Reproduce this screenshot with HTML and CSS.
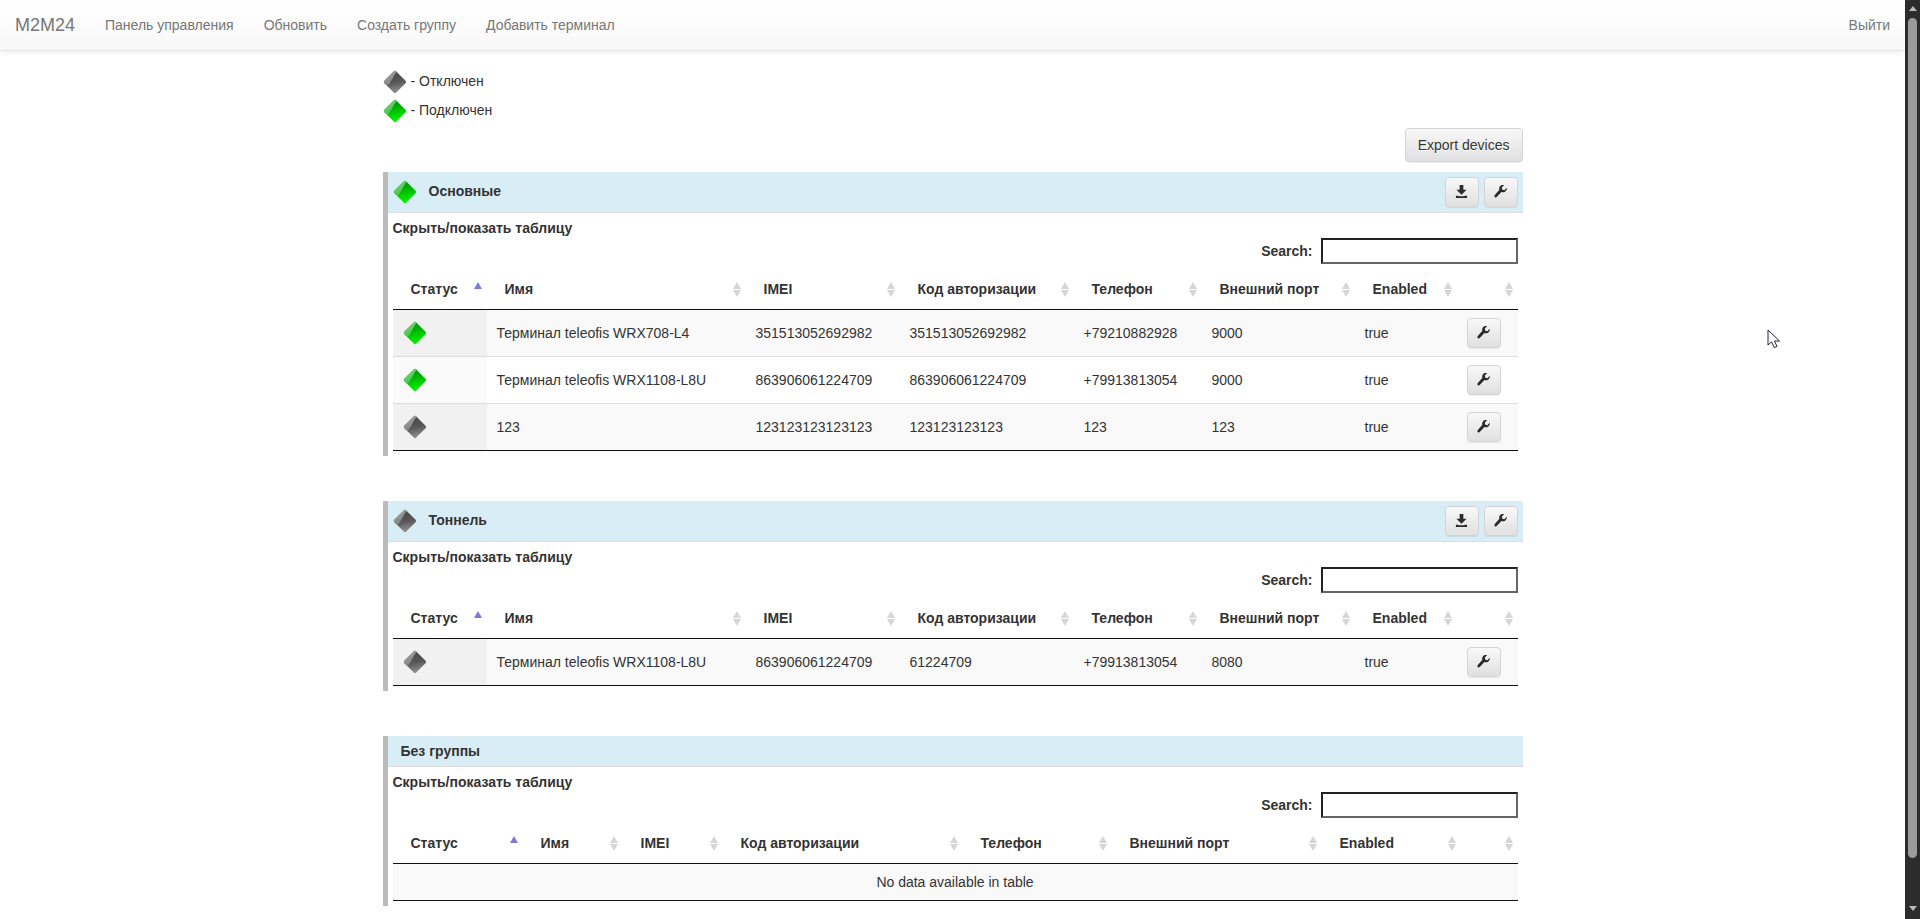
FILE: index.html
```html
<!DOCTYPE html>
<html lang="ru">
<head>
<meta charset="utf-8">
<title>M2M24</title>
<link rel="stylesheet" href="styles.css">
</head>
<body>
<svg class="defs" width="0" height="0" aria-hidden="true">
  <defs>
    <linearGradient id="gg" x1="0.3" y1="0" x2="0.5" y2="1"><stop offset="0" stop-color="#009010"/><stop offset="0.5" stop-color="#00c000"/><stop offset="1" stop-color="#00f000"/></linearGradient>
    <linearGradient id="gy" x1="0.3" y1="0" x2="0.5" y2="1"><stop offset="0" stop-color="#484848"/><stop offset="0.55" stop-color="#585858"/><stop offset="1" stop-color="#8a8a8a"/></linearGradient>
    <linearGradient id="hg" x1="0" y1="0" x2="0.6" y2="1"><stop offset="0" stop-color="#7ed87e"/><stop offset="1" stop-color="#48c048"/></linearGradient>
    <linearGradient id="hy" x1="0" y1="0" x2="0.6" y2="1"><stop offset="0" stop-color="#a8a8a8"/><stop offset="1" stop-color="#808080"/></linearGradient>
    <symbol id="d-green" viewBox="0 0 24 24">
      <path d="M12 2.6 21.4 12 12 21.4 2.6 12Z" fill="url(#gg)" stroke="url(#gg)" stroke-width="3.4" stroke-linejoin="round"/>
      <path d="M10.6 1.4C11.4.6 12.6.6 13.4 1.4L13.8 1.8C11 4.6 10 8.4 7.8 11.6 6.8 13.2 5.8 14.6 4.8 15.8L1.4 13.4C.6 12.6.6 11.4 1.4 10.6Z" fill="url(#hg)"/>
    </symbol>
    <symbol id="d-gray" viewBox="0 0 24 24">
      <path d="M12 2.6 21.4 12 12 21.4 2.6 12Z" fill="url(#gy)" stroke="url(#gy)" stroke-width="3.4" stroke-linejoin="round"/>
      <path d="M10.6 1.4C11.4.6 12.6.6 13.4 1.4L13.8 1.8C11 4.6 10 8.4 7.8 11.6 6.8 13.2 5.8 14.6 4.8 15.8L1.4 13.4C.6 12.6.6 11.4 1.4 10.6Z" fill="url(#hy)"/>
    </symbol>
    <symbol id="i-wrench" viewBox="0 0 14 14">
      <path d="M13.7 3 11.2 5.6 9 5 8.4 2.8 10.9.3C9.2-.2 7.4.3 6.3 1.6 5.5 2.7 5.3 4.1 5.8 5.2L.9 10.9C.3 11.5.3 12.6.9 13.1 1.5 13.6 2.4 13.5 2.9 13L8 7.6C9.4 8.2 11 7.9 12.2 6.9 13.5 5.8 14 4.4 13.7 3Z" fill="#2b2b2b"/>
    </symbol>
    <symbol id="i-download" viewBox="0 0 14 14">
      <path d="M5 0H9V5H12.5L7 10.5 1.5 5H5ZM1 11.5H3.2L4.4 12.2H9.6L10.8 11.5H13V14H1Z" fill="#2b2b2b"/>
    </symbol>
  </defs>
</svg>
<div class="screen">
  <div class="page">
    <nav class="navbar">
      <a class="brand" href="#">M2M24</a>
      <a class="nav-link" href="#">Панель управления</a>
      <a class="nav-link" href="#">Обновить</a>
      <a class="nav-link" href="#">Создать группу</a>
      <a class="nav-link" href="#">Добавить терминал</a>
      <a class="nav-link nav-exit" href="#">Выйти</a>
    </nav>
    <main class="container">
      <div class="legend-row"><svg class="diamond"><use href="#d-gray"/></svg><span class="legend-text">- Отключен</span></div>
      <div class="legend-row"><svg class="diamond"><use href="#d-green"/></svg><span class="legend-text">- Подключен</span></div>
      <div class="export-row"><button class="btn">Export devices</button></div>

      <section class="group">
        <header class="group-head">
          <svg class="diamond"><use href="#d-green"/></svg>
          <span class="group-title">Основные</span>
          <div class="group-actions">
            <button class="btn btn-icon"><svg class="icon"><use href="#i-download"/></svg></button>
            <button class="btn btn-icon"><svg class="icon"><use href="#i-wrench"/></svg></button>
          </div>
        </header>
        <div class="group-body">
          <div class="toggle">Скрыть/показать таблицу</div>
          <div class="search"><label for="s1">Search:</label><input id="s1" type="text"></div>
          <table class="grid">
            <colgroup><col class="w94"><col class="w259"><col class="w154"><col class="w174"><col class="w128"><col class="w153"><col class="w102"><col></colgroup>
            <thead><tr><th class="sort-asc">Статус</th><th class="sort-both">Имя</th><th class="sort-both">IMEI</th><th class="sort-both">Код авторизации</th><th class="sort-both">Телефон</th><th class="sort-both">Внешний порт</th><th class="sort-both">Enabled</th><th class="sort-both"></th></tr></thead>
            <tbody>
              <tr><td class="status"><svg class="diamond"><use href="#d-green"/></svg></td><td>Терминал teleofis WRX708-L4</td><td>351513052692982</td><td>351513052692982</td><td>+79210882928</td><td>9000</td><td>true</td><td><button class="btn btn-icon"><svg class="icon"><use href="#i-wrench"/></svg></button></td></tr>
              <tr><td class="status"><svg class="diamond"><use href="#d-green"/></svg></td><td>Терминал teleofis WRX1108-L8U</td><td>863906061224709</td><td>863906061224709</td><td>+79913813054</td><td>9000</td><td>true</td><td><button class="btn btn-icon"><svg class="icon"><use href="#i-wrench"/></svg></button></td></tr>
              <tr><td class="status"><svg class="diamond"><use href="#d-gray"/></svg></td><td>123</td><td>123123123123123</td><td>123123123123</td><td>123</td><td>123</td><td>true</td><td><button class="btn btn-icon"><svg class="icon"><use href="#i-wrench"/></svg></button></td></tr>
            </tbody>
          </table>
        </div>
      </section>

      <section class="group">
        <header class="group-head">
          <svg class="diamond"><use href="#d-gray"/></svg>
          <span class="group-title">Тоннель</span>
          <div class="group-actions">
            <button class="btn btn-icon"><svg class="icon"><use href="#i-download"/></svg></button>
            <button class="btn btn-icon"><svg class="icon"><use href="#i-wrench"/></svg></button>
          </div>
        </header>
        <div class="group-body">
          <div class="toggle">Скрыть/показать таблицу</div>
          <div class="search"><label for="s2">Search:</label><input id="s2" type="text"></div>
          <table class="grid">
            <colgroup><col class="w94"><col class="w259"><col class="w154"><col class="w174"><col class="w128"><col class="w153"><col class="w102"><col></colgroup>
            <thead><tr><th class="sort-asc">Статус</th><th class="sort-both">Имя</th><th class="sort-both">IMEI</th><th class="sort-both">Код авторизации</th><th class="sort-both">Телефон</th><th class="sort-both">Внешний порт</th><th class="sort-both">Enabled</th><th class="sort-both"></th></tr></thead>
            <tbody>
              <tr><td class="status"><svg class="diamond"><use href="#d-gray"/></svg></td><td>Терминал teleofis WRX1108-L8U</td><td>863906061224709</td><td>61224709</td><td>+79913813054</td><td>8080</td><td>true</td><td><button class="btn btn-icon"><svg class="icon"><use href="#i-wrench"/></svg></button></td></tr>
            </tbody>
          </table>
        </div>
      </section>

      <section class="group">
        <header class="group-head group-head-plain">
          <span class="plain-title">Без группы</span>
        </header>
        <div class="group-body">
          <div class="toggle">Скрыть/показать таблицу</div>
          <div class="search"><label for="s3">Search:</label><input id="s3" type="text"></div>
          <table class="grid">
            <colgroup><col class="w130"><col class="w100"><col class="w100"><col class="w240"><col class="w149"><col class="w210"><col class="w139"><col></colgroup>
            <thead><tr><th class="sort-asc">Статус</th><th class="sort-both">Имя</th><th class="sort-both">IMEI</th><th class="sort-both">Код авторизации</th><th class="sort-both">Телефон</th><th class="sort-both">Внешний порт</th><th class="sort-both">Enabled</th><th class="sort-both"></th></tr></thead>
            <tbody>
              <tr><td class="empty" colspan="8">No data available in table</td></tr>
            </tbody>
          </table>
        </div>
      </section>
    </main>
    <svg class="cursor" width="14" height="20" viewBox="0 0 14 20"><path d="M1 1V16L4.6 12.9 7.3 18.6 10 17.4 7.4 12H12.5Z" fill="#fff" stroke="#23233a" stroke-width="1"/></svg>
  </div>
  <div class="scrollbar">
    <span class="sb-up"></span>
    <span class="sb-thumb"></span>
    <span class="sb-down"></span>
  </div>
</div>
</body>
</html>
```

FILE: styles.css
```css
* { box-sizing: border-box; }
html, body { margin: 0; height: 919px; overflow: hidden; background: #fff; }
body { font: 14px/20px "Liberation Sans", Arial, sans-serif; color: #333; }
.defs { position: absolute; }
.screen { display: flex; height: 919px; }
.page { position: relative; flex: 1; min-width: 0; }

.navbar {
  display: flex; align-items: center; height: 51px;
  background: linear-gradient(to bottom, #fff 0%, #f8f8f8 100%);
  border-bottom: 1px solid #e7e7e7;
  box-shadow: 0 1px 5px rgba(0,0,0,.075);
}
.navbar a { text-decoration: none; color: #777; }
.brand { font-size: 18px; padding: 0 15px; width: 90px; }
.nav-link { padding: 0 15px; }
.nav-exit { margin-left: auto; }

.container { width: 1140px; margin: 0 auto; padding-top: 19px; }
.legend-row { display: flex; align-items: center; gap: 4px; height: 24px; margin-bottom: 5px; }
.legend-text { margin-top: -2px; }
.diamond { display: block; width: 24px; height: 24px; flex: none; }
.export-row { display: flex; justify-content: flex-end; margin-bottom: 10px; }

.btn {
  font: 14px/20px "Liberation Sans", Arial, sans-serif; color: #333;
  height: 34px; padding: 6px 12px;
  border: 1px solid #d4d4d4; border-radius: 4px;
  background: linear-gradient(to bottom, #f8f8f8 0%, #e0e0e0 100%);
  box-shadow: 0 1px 1px rgba(0,0,0,.075);
  text-shadow: 0 1px 0 #fff;
}
.btn-icon { display: flex; align-items: center; justify-content: center; width: 34px; height: 30px; padding: 0 0 2px; }
.icon { display: block; width: 13px; height: 13px; }

.group { border-left: 5px solid #bbb; margin-bottom: 45px; }
.group-head {
  display: flex; align-items: center; height: 41px; padding: 0 5px;
  background: #d9edf7; border-bottom: 1px solid #ddd; font-weight: bold;
}
.group-head-plain { height: 31px; padding-left: 13px; }
.plain-title { margin-bottom: 1px; }
.group-title { margin-left: 12px; margin-bottom: 2px; }
.group-actions { display: flex; gap: 5px; margin-left: auto; }
.group-body { padding: 5px; }
.toggle { font-weight: bold; }
.search { display: flex; justify-content: flex-end; align-items: center; gap: 8px; margin-bottom: 5px; font-weight: bold; }
.search input {
  width: 197px; height: 26px; padding: 1px; background: #fff;
  border: 2px solid; border-color: #222 #666 #666 #222;
}

.grid { width: 100%; table-layout: fixed; border-collapse: separate; border-spacing: 0; }
.w94 { width: 94px; } .w100 { width: 100px; } .w102 { width: 102px; } .w128 { width: 128px; } .w130 { width: 130px; }
.w139 { width: 139px; } .w149 { width: 149px; } .w153 { width: 153px; } .w154 { width: 154px; }
.w174 { width: 174px; } .w210 { width: 210px; } .w240 { width: 240px; } .w259 { width: 259px; }
.grid th {
  position: relative; height: 41px; padding: 10px 18px 10px 18px; text-align: left; white-space: nowrap;
  border-bottom: 1px solid #111; font-weight: bold;
}
.sort-both::before, .sort-both::after, .sort-asc::before {
  content: ""; position: absolute; right: 5px; width: 0; height: 0;
  border-left: 4.5px solid transparent; border-right: 4.5px solid transparent;
}
.sort-both::before { top: 13px; border-bottom: 7px solid #d6d6d6; }
.sort-both::after { top: 21px; border-top: 7px solid #d6d6d6; }
.sort-asc::before { top: 13px; border-bottom: 7px solid #7b7bd8; }
.grid td { padding: 8px 10px; border-top: 1px solid #ddd; background: #fff; white-space: nowrap; overflow: hidden; }
.grid tbody tr:first-child td { border-top: 0; }
.grid tbody tr:last-child td { border-bottom: 1px solid #111; }
.grid tbody tr:nth-child(odd) td { background: #f9f9f9; }
.grid tbody tr:nth-child(odd) td.status { background: #f1f1f1; }
.grid tbody tr:nth-child(even) td.status { background: #fafafa; }
.grid td.empty { text-align: center; }

.cursor { position: absolute; left: 1767px; top: 329px; }

.scrollbar { display: flex; flex-direction: column; align-items: center; width: 15px; height: 919px; background: #2c2c2c; }
.sb-up, .sb-down { display: block; width: 0; height: 0; border-left: 4.5px solid transparent; border-right: 4.5px solid transparent; }
.sb-up { margin-top: 6px; border-bottom: 5px solid #bbb; }
.sb-thumb { display: block; width: 9px; height: 840px; margin-top: 7px; background: #9b9b9b; border-radius: 5px; }
.sb-down { margin-top: 48px; border-top: 5px solid #bbb; }
```
